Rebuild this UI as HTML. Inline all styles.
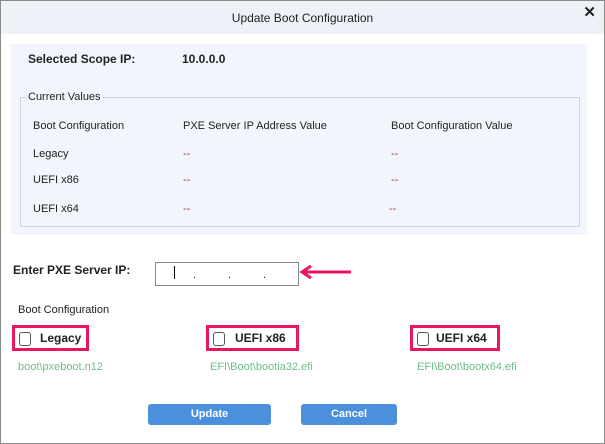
<!DOCTYPE html>
<html><head><style>
body{margin:0;width:605px;height:444px;overflow:hidden;font-family:"Liberation Sans",sans-serif;font-size:11px;color:#222;background:#fff}
.win{position:absolute;left:0;top:0;width:603px;height:442px;border:1px solid #8a8a8a;background:#fff}
.hd{position:absolute;left:0;top:0;width:603px;height:33px;background:#eef2f8;text-align:center;line-height:34px;font-size:12px}
.x{position:absolute;right:8px;top:4px;font-size:15px;font-weight:bold;line-height:16px}
.a{position:absolute;white-space:nowrap}
.panel{position:absolute;left:10px;top:43px;width:576px;height:191px;background:#f2f6fc}
.fs{position:absolute;left:19px;top:96px;width:558px;height:128px;border:1px solid #cfd6de}
.b{font-weight:bold}
.d{color:#a33}
.cb{position:absolute;border:3px solid #e8175d;height:20px;background:#fff}
.box{position:absolute;width:10px;height:12px;border:1px solid #555;border-radius:3px;top:4px;left:4px}
.g{color:#6cbf8a}
.btn{position:absolute;top:403px;height:21px;background:#4a90dc;color:#fff;border-radius:3px;text-align:center;line-height:21px;font-weight:bold}
</style></head><body>
<div class="win">
<div class="hd">Update Boot Configuration</div>
<div class="x">✕</div>
<div class="panel"></div>
<div class="fs"></div>
<div class="a" style="left:26px;top:90px;background:#f2f6fc;padding:0 1px">Current Values</div>
<div class="a b" style="left:27px;top:51px;font-size:12px">Selected Scope IP:</div>
<div class="a b" style="left:181px;top:51px;font-size:12px">10.0.0.0</div>
<div class="a" style="left:32px;top:119px">Boot Configuration</div>
<div class="a" style="left:182px;top:119px">PXE Server IP Address Value</div>
<div class="a" style="left:390px;top:119px">Boot Configuration Value</div>
<div class="a" style="left:32px;top:147px">Legacy</div><div class="a d" style="left:182px;top:147px">--</div><div class="a d" style="left:390px;top:147px">--</div>
<div class="a" style="left:32px;top:173px">UEFI x86</div><div class="a d" style="left:182px;top:173px">--</div><div class="a d" style="left:390px;top:173px">--</div>
<div class="a" style="left:32px;top:202px">UEFI x64</div><div class="a d" style="left:182px;top:202px">--</div><div class="a d" style="left:388px;top:202px">--</div>
<div class="a b" style="left:12px;top:262px;font-size:12px">Enter PXE Server IP:</div>
<div class="a" style="left:154px;top:261px;width:142px;height:22px;border:1px solid #888;background:#fff"></div>
<div class="a" style="left:173px;top:265px;width:1px;height:13px;background:#000"></div>
<div class="a" style="left:192px;top:268px">.</div><div class="a" style="left:227px;top:268px">.</div><div class="a" style="left:262px;top:268px">.</div>
<svg class="a" style="left:298px;top:263px" width="56" height="16"><path d="M4 8H52" stroke="#e8175d" stroke-width="3"/><path d="M12 2L3 8L12 14" stroke="#e8175d" stroke-width="3" fill="none"/></svg>
<div class="a" style="left:17px;top:303px">Boot Configuration</div>
<div class="cb" style="left:11px;top:324px;width:71px"><div class="box"></div><span class="a b" style="left:25px;top:3px;font-size:12px">Legacy</span></div>
<div class="cb" style="left:205px;top:324px;width:87px"><div class="box"></div><span class="a b" style="left:26px;top:3px;font-size:12px">UEFI x86</span></div>
<div class="cb" style="left:409px;top:324px;width:84px"><div class="box"></div><span class="a b" style="left:23px;top:3px;font-size:12px">UEFI x64</span></div>
<div class="a g" style="left:17px;top:360px">boot\pxeboot.n12</div>
<div class="a g" style="left:209px;top:360px">EFI\Boot\bootia32.efi</div>
<div class="a g" style="left:416px;top:360px">EFI\Boot\bootx64.efi</div>
<div class="btn" style="left:147px;width:123px">Update</div>
<div class="btn" style="left:300px;width:96px">Cancel</div>
</div>
</body></html>
